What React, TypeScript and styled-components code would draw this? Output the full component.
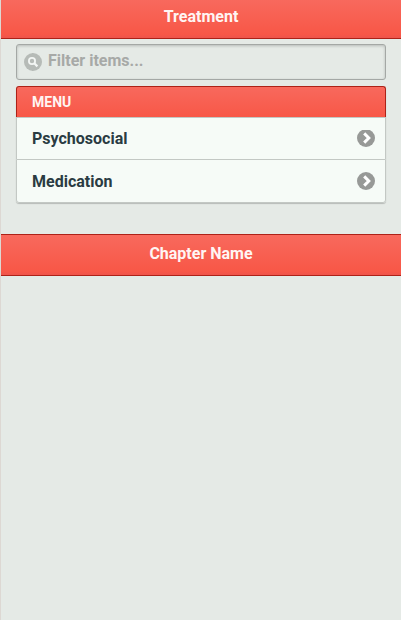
import React from "react";
import styled, { createGlobalStyle } from "styled-components";

const GlobalStyle = createGlobalStyle`
  *, *::before, *::after { box-sizing: border-box; }
  body {
    margin: 0;
    background: #e5eae6;
    font-family: Roboto, "Liberation Sans", sans-serif;
    font-size: 16px;
    font-weight: 700;
    overflow: hidden;
  }
`;

const Page = styled.div`
  height: 620px;
  border-left: 1px solid #ddd8d3;
  background: #e5eae6;
`;

const Bar = styled.header<{ $top?: boolean }>`
  height: ${(p) => (p.$top ? 39 : 42)}px;
  border-bottom: 1px solid #ad2218;
  border-top: ${(p) => (p.$top ? "0" : "1px solid #ad2218")};
  background: linear-gradient(#f8695d, #f85747 90%, #ee544b);
  display: flex;
  justify-content: center;
  padding-top: ${(p) => (p.$top ? 7 : 9)}px;
`;

const Title = styled.h1`
  margin: 0;
  color: #fff5f3;
  font-size: 16px;
  line-height: 20px;
  font-weight: 700;
`;

const Content = styled.main`
  padding: 5px 15px 31px;
`;

const SearchBox = styled.label`
  display: flex;
  align-items: flex-start;
  height: 36px;
  padding: 8px 7px 0;
  border: 1px solid #a4a8a5;
  border-radius: 3px;
  box-shadow: inset 0 1px 3px rgba(0, 0, 0, 0.2);
`;

const SearchInput = styled.input`
  flex: 1;
  min-width: 0;
  height: 18px;
  margin: -2px 0 0 6px;
  padding: 0;
  border: 0;
  outline: 0;
  background: transparent;
  font: inherit;
  &::placeholder { color: #a7a9a7; opacity: 1; }
`;

const List = styled.ul`
  list-style: none;
  margin: 6px 0 0;
  padding: 0;
  border-radius: 3px;
  box-shadow: 0 1px 1px rgba(0, 0, 0, 0.2);
`;

const Divider = styled.li`
  height: 31px;
  padding: 0 15px;
  border: 1px solid #ad2218;
  border-bottom: 0;
  border-radius: 3px 3px 0 0;
  background: linear-gradient(#f8695d, #f85747);
  color: #fff5f3;
  font-size: 14px;
  line-height: 31px;
`;

const Item = styled.li<{ $last?: boolean }>`
  display: flex;
  align-items: center;
  justify-content: space-between;
  height: ${(p) => (p.$last ? 44 : 42)}px;
  padding: 0 10px 0 15px;
  border: 1px solid #c3c8c4;
  border-bottom-width: ${(p) => (p.$last ? 1 : 0)}px;
  border-radius: ${(p) => (p.$last ? "0 0 3px 3px" : "0")};
  background: #f6fbf7;
  color: #2a3b42;
`;

const Icon = styled.svg<{ $raised?: boolean }>`
  display: block;
  flex: none;
  width: 18px;
  height: 18px;
  margin-bottom: ${(p) => (p.$raised ? 2 : 0)}px;
`;

const SearchIcon = () => (
  <Icon viewBox="0 0 18 18" fill="none">
    <circle cx="9" cy="9" r="9" fill="#b6bbb7" />
    <circle cx="8" cy="8" r="3.1" stroke="#f3f6f4" strokeWidth="1.8" />
    <path d="M10.3 10.3L13.4 13.4" stroke="#f3f6f4" strokeWidth="2.3" />
  </Icon>
);

const ArrowIcon = ({ clipped }: { clipped?: boolean }) => (
  <Icon viewBox="0 0 18 18" fill="none" $raised={clipped}>
    <circle cx="9" cy="9" r="9" fill="#979997" />
    <path d="M7.2 4.4L11.8 9L7.2 13.6" stroke="#fff" strokeWidth="3" />
    {clipped && <rect width="18" height="1" fill="#f6fbf7" />}
  </Icon>
);

const items = ["Psychosocial", "Medication"];

export default function App() {
  return (
    <>
      <GlobalStyle />
      <Page>
        <Bar $top><Title>Treatment</Title></Bar>
        <Content>
          <SearchBox>
            <SearchIcon />
            <SearchInput placeholder="Filter items..." />
          </SearchBox>
          <List>
            <Divider>MENU</Divider>
            {items.map((label, i) => (
              <Item key={label} $last={i === items.length - 1}>
                <span>{label}</span>
                <ArrowIcon clipped={i === 0} />
              </Item>
            ))}
          </List>
        </Content>
        <Bar><Title>Chapter Name</Title></Bar>
      </Page>
    </>
  );
}
